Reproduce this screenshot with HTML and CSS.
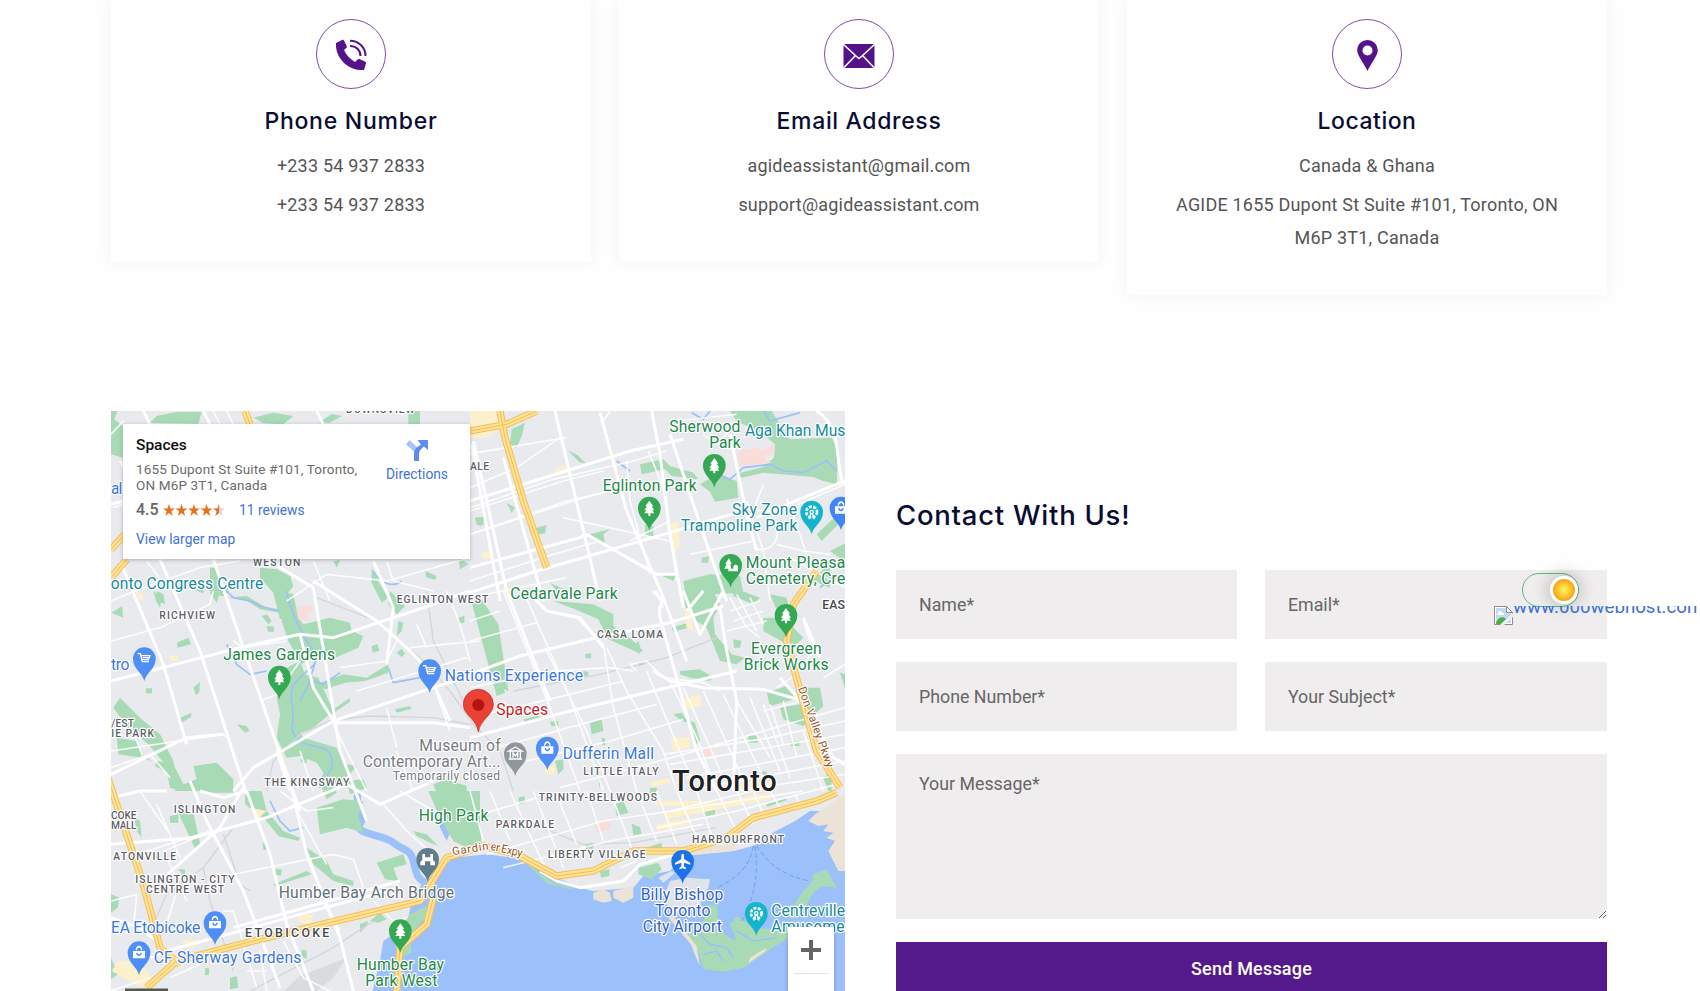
FILE: index.html
```html
<!DOCTYPE html>
<html lang="en">
<head>
<meta charset="utf-8">
<title>Contact</title>
<link rel="stylesheet" href="styles.css">
</head>
<body>
<main class="page">
  <section class="cards">
    <article class="card">
      <div class="badge">
        <svg class="badge-icon" viewBox="0 0 32 32"><path class="ink" d="M1 4 7 1c1-.5 1.800 0 2.200 1l2.500 5c.4 1 .1 1.700-.7 2.300L9 11c2 5 6 9 11 12l2.500-2.500c.8-.7 1.500-.8 2.400-.3l5 2.300c1 .5 1.400 1.200 1 2.200L29 31C12 32 0 18 1 4Z"/><path class="wave" d="M15 1.800C24 2 30.500 8.500 30.500 17M15 7C21 7 25.500 11 25.500 17"/></svg>
      </div>
      <h2 class="card-title t-phone">Phone Number</h2>
      <p class="card-line">+233 54 937 2833</p>
      <p class="card-line">+233 54 937 2833</p>
    </article>
    <article class="card">
      <div class="badge">
        <svg class="badge-icon" viewBox="0 0 32 32"><rect class="ink" x=".5" y="5" width="31" height="24" rx="1.500"/><path class="seam" d="M.5 5.500 13 17l3 2.500L19 17 31.500 5.500M1 28.500 12 17M31 28.500 20 17"/></svg>
      </div>
      <h2 class="card-title t-email">Email Address</h2>
      <p class="card-line">agideassistant@gmail.com</p>
      <p class="card-line">support@agideassistant.com</p>
    </article>
    <article class="card">
      <div class="badge">
        <svg class="badge-icon" viewBox="0 0 32 32"><path class="ink" fill-rule="evenodd" d="M16.500 1a10.300 10.300 0 0 0-10.300 10.500c0 5 6 11.500 10.300 20.500 4.300-9 10.300-15.500 10.300-20.500A10.300 10.300 0 0 0 16.500 1Zm0 5.500a5 5 0 1 1 0 10 5 5 0 0 1 0-10Z"/></svg>
      </div>
      <h2 class="card-title t-loc">Location</h2>
      <p class="card-line">Canada &amp; Ghana</p>
      <p class="card-line">AGIDE 1655 Dupont St Suite #101, Toronto, ON M6P 3T1, Canada</p>
    </article>
  </section>

  <section class="contact">
    <div class="map">
      <svg class="map-art" viewBox="111 410 734 581">
        <defs>
          <path id="pin" d="M0 67C-5 42-34 32-34 0A34 34 0 1 1 34 0C34 32 5 42 0 67Z"/>
          <path id="tree" fill="#fff" d="M0-22-12-5h5l-8 12h6l-6 9h12v8h6v-8h12L9 7h6L7-5h5Z"/>
          <path id="cart" fill="none" stroke="#fff" stroke-width="4" d="M-20-15h8l6 24h20M-10-9h27l-5 12H-7ZM-4-3h18"/>
          <path id="bag" fill-rule="evenodd" fill="#fff" d="M-18-5h36v22h-36ZM-8 0v4c3 8 13 8 16 0V0H4c0 6-8 6-8 0ZM-10-7c0-18 20-18 20 0h-4c0-11-12-11-12 0Z"/>
          <g id="wheel" fill="none" stroke="#fff" stroke-width="4"><circle r="16" stroke-dasharray="9 4" stroke-width="8"/><circle r="5"/><path d="M-2 4-8 22M2 4 8 22"/></g>
        </defs>

        <!-- water -->
        <g class="water" transform="matrix(.33333 0 0 .33333 100 790)">
          <path d="M1160 190 1060 200 1010 245 965 280 935 330 925 380 880 430 850 450 840 510 815 610H2300V60L2130 60 2085 90 2010 130 1960 165 1900 180 1800 190 1750 195 1710 240 1630 255 1600 290 1480 300 1440 290 1360 255 1300 225 1240 200Z"/>
          <path d="M1015 0 1020 110 1040 150 1060 100 1050 0Z"/>
          <path class="river" d="M775 0C760 50 800 70 780 100S850 130 880 155 930 170 940 210 950 260 975 275"/>
        </g>

        <!-- parks -->
        <g class="park" transform="matrix(.33333 0 0 .33333 100 400)">
          <path d="M33 30h20l-10 25 25 20V170L33 160ZM150 65l20-20 60-12h75l-10 35ZM460 50l60-15 60 10-30 25-60-3ZM655 65l40-25 30 5-35 20ZM925 30h35v40h-35ZM480 500l50 5 40 20 10 30-30 40 30 50-40 10-20-80-40-45ZM330 500h20l15 60-15 45-20-30ZM350 540l35 20-5 25h-20ZM700 480l20-2-10 22ZM975 510l35 15-5 12-25-8ZM815 500l25 50 25 40-20 15-30-60ZM1075 470l30 20-25 15ZM1130 355l12 5v20ZM170 570l20 10 5 30-20-10ZM290 545l25 12-5 20-20-8Z"/>
        </g>
        <g class="park" transform="matrix(.33333 0 0 .33333 470 400)">
          <path d="M125 85l40-20-10 40-15 35-20-10ZM293 148l30 15 25 25-20-5ZM510 190l70-15 20 20 70 20 15 20-80-10-20-20-70 15ZM690 250l50-30 60 20 5 50-70 12-15-30ZM780 30H905L930 70 960 115 1085 110 1105 150 1100 250 1060 240 1030 228 960 222 880 215 815 230 800 218 880 198 912 170 915 130 880 100 800 60ZM1040 400l80-75v30l-65 65ZM110 305l25 15-10 15ZM15 350l28-3-3 25h-20ZM200 380l30-8-5 25-20 3ZM360 400l60-15-20 15 5 25-40-10ZM525 370l25 5v30h-25ZM565 520l55-5-10 25ZM640 540l80-20 90 5 10 50-100 5-70 20ZM695 470l22-5-3 20h-20ZM790 560l80 30-20 20-60-25ZM1080 450l50-25v60ZM1030 540l50-60v80ZM240 545l40 20-15 10Z"/>
        </g>
        <g class="park" transform="matrix(.33333 0 0 .33333 100 590)">
          <path d="M35 65l32-20 2 35ZM230 155l35-15 8 20-40 10ZM485 75l15-5 15 20-10 10ZM500 105l22 2v15h-18ZM540 0l40 10 15 70 15 20 80-20 60 15 5 25 35 15-15 35-70 30-60-10-40 30-40-70-20-60ZM560 230l40-20 15 40 40 10 45 100-65 55-35 10 10 15 50 15 50 15 25 50 35 5-20 25-50 30 10 25-30 20-20-50 10-30-20-30-50-20-40 5-30-60 10-70-10-50ZM650 280l80-30 70 10 65-40v25l-70 25-60 5-60 20ZM680 370l70-50v12l-65 45ZM280 290l20-17-2 30-10 10ZM240 380l35-15-2 12-28 18ZM410 400l30 5 8 15-12 5ZM138 292h18v15h-18ZM890 185l15-12 10 15-10 10ZM815 165l18-5 5 20-20 5ZM885 355l45-10 5 8-45 12ZM895 90l15 5-5 25-15 15ZM870 0l45 45-25 25-25-30ZM1110 20l90 270 25 10-30-200-60-90ZM280 525l70-10 50 50v40H300ZM170 510l50 10 30 60 50-20 15 40h-90l-15-50-45-25ZM50 440l60 10 20 40 25 20-30-10-70-10ZM60 320l60 60 60 50 40 80 20 90-30-10-15-70-50-60-60-50-45-60ZM610 490l12 2-3 25-18-5ZM1000 580l40-15 60 20v20h-90ZM160 0l25 20-5 30-12-20ZM380 20l60-5 60 35 40 5v10l-60-10-45-30ZM1075 80l18-5v20h-18ZM740 570l50-5 10 25-50 20Z"/>
        </g>
        <g class="park" transform="matrix(.33333 0 0 .33333 470 590)">
          <path d="M0 15h20l85 290-25 10ZM250 30l120 10 60 30 0 35 60 45 30 30-15 5-90-40-30-60-70-30ZM605 110l50-15v15l-45 12ZM640 0h90l20 40-20 40 5 50 50 60 40 10-25 20-50-10-40-100-60-40ZM880 80l60 0 60 60-30 30-90-50ZM790 145l25 5-5 20h-18ZM345 190l18-3v15h-16ZM340 240l15 3v12h-15ZM630 240l60-5 40 25-10 10-60-10-30-10ZM890 305l60-20 40 35-90 25ZM1000 290h50l10 55-40 40-20 20-60-20-10-35 60-10ZM360 395l35-10 5 35-35 10ZM660 390l15 5 15 55-10 10-15-30ZM610 370l25-5 20 30-20-5ZM835 435l28-2v22h-28ZM240 393l25-3v15h-22ZM960 455l28-5v15h-26ZM395 440l10 3v20h-8ZM385 550l8 25-5 15ZM255 510l25-5v30l-15 15ZM1110 245l20 5v60ZM1060 560l25-20v60h-10ZM160 385l50-12-5 10-40 10ZM505 215l15-5 5 10-18 5ZM870 543l20-3v12h-20ZM900 10l50 10 10 40-30 20ZM505 150l10 30-10 10-10-30ZM540 590l20 0v15h-20Z"/>
        </g>
        <g class="park" transform="matrix(.33333 0 0 .33333 100 790)">
          <path d="M650 50l80-25 60 5-15 45 10 30 5 20-50-15-80 20ZM985 0h155v170l-40 0-40-20-40-70ZM940 120l40 10 35 35-25-10-40-20ZM830 215l80-25 10 30-40 10 15 40-40-5ZM435 0h50l15 60 50 60 50 20-5 10-60-15-40-50-60-45ZM620 170l60 40 20 40 60 20v15l-60-15-60-50ZM525 235h20l-2 18h-18ZM520 280l100-40 15 10-110 35ZM235 65l45 0 22 100-18 5ZM210 75l25-5v25h-25ZM487 155l12 5 3 18-12-3ZM810 390l30-25 20 20-25 10ZM780 400l25-10-5 15-20 20ZM930 370l50-25 20 30-40 20-30 50 5 40-35 15-20-50ZM390 560l20-5 5 35-25 5ZM315 530l12 2v20h-12ZM33 310l25 10-5 30-20 15ZM33 500l20 50-20 15ZM100 70l20 20 5 50-15-20ZM235 235l20 0v25ZM605 475l15 5v25l-15-10Z"/>
        </g>
        <g class="park" transform="matrix(.33333 0 0 .33333 470 790)">
          <path d="M0 80l30 20 5 50-35 20ZM145 20l18-5 3 20-18 5ZM435 40l25-10 15 35-35 10ZM485 98l25 10 5 20-25 5ZM700 60l35-5v15l-32 8ZM345 160l25-5v20h-22ZM390 240l28-5v20l-25 5ZM515 175l60-20v20l-60 10ZM505 230l60-15 10 20-30 30-40-15ZM890 40l60-20v8l-60 20ZM720 340L742 345 745 405 775 440 800 450 780 400 800 375 850 410 905 415 960 400 1010 400 940 450 880 490 820 530 760 542 700 535 685 480 660 440 655 415 700 390ZM955 365L1000 300 1028 270 1030 250 1070 235 1100 290 1058 285 1030 305 1000 360 970 385ZM150 200l100 75 60 15-5 5-70-15ZM645 170l40 0-5 12-40 5Z"/>
          <path class="sand" d="M1015 90l20-20 90-60v230l-20 0-30-60 20-30-25-10 20-15-30-5 15-20-30 5ZM370 305l30-10 20 10 5 25-25 5-30-10ZM430 300l60-15v35l-30 15-30-15ZM670 170l125-10v20l-125 12ZM595 380l15-5 70 90 10 60-12-25-15-40ZM840 500l50-30-5 12-50 35Z"/>
          <path class="runway" d="M565 260l40-20 10 5-35 30ZM600 270l50-10 70 5-5 25-30 60-80 20-25-50Z"/>
        </g>

        <!-- streams -->
        <g class="stream" transform="matrix(.33333 0 0 .33333 100 590)">
          <path d="M560 0C570 60 600 120 640 180S560 240 575 330 560 400 590 440 680 450 695 500 655 560 660 590M600 330C640 270 640 200 670 160M380 160 410 220 450 250 500 240M865 230 880 275 960 260M380 0 400 20 450 30 480 45 540 60M640 270 670 280 720 245"/>
          <path d="M820-60C840-20 880-10 905-30M510 630 540 690 570 720 610 710"/>
        </g>
        <g class="stream" transform="matrix(.33333 0 0 .33333 470 400)"><path d="M665 35 700 55 720 30M440 180 480 210M700 200 780 235 820 200 900 190 940 210 1000 215 1070 180 1100 210M880 30 900 60 990 35M1100 520 1050 560"/></g>
        <g class="stream" transform="matrix(.33333 0 0 .33333 470 790)"><path d="M690 430 720 460 770 470 790 500M700 490 740 480 760 510M800 420 850 450 920 440"/></g>

        <!-- built-up accents -->
        <g class="accent" transform="matrix(.33333 0 0 .33333 470 400)"><path d="M0 30h90v50l-40 30H0ZM255 200l35-5-5 20-30 5ZM35 455l25-5 5 20-25 5ZM600 370l25-10 5 80-25 20Z"/><path class="clinic" d="M805 150l60-10 10 10 40-20-5 30-35 10 30 15-100 10Z"/></g>
        <g class="accent" transform="matrix(.33333 0 0 .33333 470 590)"><path d="M640 325l50-15 5 35-45 10ZM225 530l30-5v25h-30ZM600 440l60 0 0 30-50 10ZM800 570l120 0v30h-120ZM640 50l20 10 10 60-20-10ZM540 575l60-15v15l-55 15Z"/><path class="clinic" d="M700 475l30-5v25l-30 5Z"/></g>
        <g class="accent" transform="matrix(.33333 0 0 .33333 100 790)"><path d="M590 370l50 0-10 30-30-5ZM55 510l60 0 40 50-30 30-90-50ZM240 450l60-5-20 30ZM450 50l50 10-30 25Z"/><path d="M580 55l320-60v20l-310 60ZM550 20h180v15H560ZM560 90l100-20v20l-100 20Z" transform="translate(1110 10)"/><path class="clinic" d="M1485 100l40-10 10 20-45 15Z"/></g>
        <g class="accent" transform="matrix(.33333 0 0 .33333 100 590)"><path d="M210 195l22-5 3 18-22 3ZM110 0l20 10v20l-15-5Z"/><path class="clinic" d="M590 50l40-10 10 20-20 15 5 15-30-5Z"/></g>

        <!-- railways -->
        <g class="rail" transform="matrix(.33333 0 0 .33333 100 590)"><path d="M650 20 830 90 960 200 1050 300 1120 400 1200 480 1240 600M600 430 690 390 800 375 1000 380 1110 400M1240 300 1500 250 1700 200 1850 140M500 600 520 510 600 430M1100 350 1000 150 980 0"/></g>
        <g class="rail" transform="matrix(.33333 0 0 .33333 100 790)"><path d="M400 110 310 230 200 310 160 400M310 230 330 330 400 540M370 130 420 280 450 300M450 600 700 470 820 390M1300 100 1450 160 1600 155 1850 110"/><path class="yard" d="M540 610 600 555 740 500 700 560 640 610Z"/></g>

        <!-- minor streets -->
        <g class="minor" transform="matrix(.33333 0 0 .33333 100 400)">
          <path d="M33 100 70 60M40 320 140 290M33 600 130 560 300 500 420 480M140 480 200 560M340 30 360 70M380 30 400 70M560 600 680 520 860 540 1110 470M860 480 880 540 1000 570M640 480 690 600M1100 160 1400 110M1110 320 1360 235 1600 180 1700 150M1110 400 1400 300 1600 255M1110 540 1360 460 1500 420M1110 590 1400 530"/>
        </g>
        <g class="minor" transform="matrix(.33333 0 0 .33333 470 400)">
          <path d="M0 260 140 200 270 110M0 330 280 240 400 210M0 400 310 300 480 250M535 150 580 260 620 540M470 180 480 300 540 520M280 350 600 420M480 420 600 360M830 300 880 450 900 600M950 290 1010 460M880 250 850 330 960 320 1125 250M700 100 740 130 800 70M850 440C900 460 930 420 920 380M920 430 1000 450 1080 460M400 60 420 30M840 500 960 470 1125 560M620 60 800 40M660 460 850 420"/>
        </g>
        <g class="minor" transform="matrix(.33333 0 0 .33333 100 590)">
          <path d="M33 150 180 110 330 40 340 0M33 480 370 430 380 440M480 330 530 310 600 210M400 150 430 170 560 150M860 350 890 470M770 300 1100 200M1000 280 1050 420M1040 0 1080 100 1110 210M950 100 980 170M930 170 1140 150M720 230 860 210 890 150M600 480 640 600M700 400 800 600M890 480 940 600M33 530 150 490 210 560M90 400 130 500M33 390 100 390"/>
        </g>
        <g class="minor" transform="matrix(.33333 0 0 .33333 470 590)">
          <path d="M100 0 240 350 330 600M160 0 300 320 400 600M230 180 350 420 420 600M310 70 400 160 430 350 500 600M410 170 470 300 580 480 620 600M530 240 600 410 680 600M600 270 680 440 740 600M640 290 760 560M700 300 830 590M760 310 880 560M800 330 900 500M840 320 930 540M880 340 960 560M0 150 200 95M90 60 0 90M0 290 250 240 420 230 490 240M500 240 480 220 530 210 580 260 700 275 750 300M0 380 300 310 460 270M80 470 350 395 560 340M170 510 420 450 640 385M270 590 640 490 880 420 1125 350M580 490 900 440 1125 390M600 520 1125 430M650 560 1125 470M700 590 1125 510M800 600 1125 550M580 50 560 0M780 20 830 110 870 140M800 10 860 120M840 20 880 100M780 60 870 30M790 90 880 60M770 120 890 90M900 340 940 460M940 330 980 500M1000 420 1060 600M880 360 1000 330M1060 260 1125 220M1000 90 1030 180 980 250 920 290"/>
        </g>
        <g class="minor" transform="matrix(.33333 0 0 .33333 100 790)">
          <path d="M170 40 240 200M120 0 210 130M110 190 330 120M33 330 110 310 100 420M400 250 700 190 760 205 790 290M580 40 680 220M540 0 620 60 700 50M850 40 930 130 1000 190M200 400 230 300M370 360 400 360 470 590M200 200 260 330M640 290 720 420M550 450 610 560 690 600M480 480 500 600M440 540 500 540M150 500 300 450M33 600 150 560M210 560 300 520M190 180 340 120M900 0 1000 60M820 330 880 390 920 380"/>
        </g>
        <g class="minor" transform="matrix(.33333 0 0 .33333 470 790)">
          <path d="M0 0 40 150M60 0 120 150M120 0 220 220M190 0 280 230M260 10 320 160M350 0 400 150M420 0 500 210M500 0 560 150M560 0 620 160M620 0 680 140M680 0 730 150M740 0 800 120M800 0 850 100M850 0 880 70M900 0 930 50M970 0 990 40M0 80 200 20M50 190 400 90 600 60 850 0M100 230 420 150 700 100M540 70 1000 0M560 110 800 60 1100-20M450 230 500 210"/>
        </g>

        <!-- arterial streets -->
        <g class="major" transform="matrix(.33333 0 0 .33333 100 400)">
          <path d="M60 180 130 290 180 420M60 480 190 790 260 1030M130 30 150 70M310 30 330 70M33 310 70 300M180 475 300 750 440 1180M340 475 430 740 540 1060 600 1230M500 475 640 560 720 1050 800 1260M33 840 420 740 600 700 700 710 1000 610 1110 570M33 1120 260 1010 370 1000M640 540 830 660 920 740 980 800 1050 960M820 480 880 620 860 790M1115 130 1200 600M650 30 670 70"/>
        </g>
        <g class="major" transform="matrix(.33333 0 0 .33333 470 400)">
          <path d="M10 120 110 570 240 900M100 170 220 600M255 30 390 600M390 35 470 330 580 590 650 780M545 30 570 160 600 400 640 620M600 100 700 400 770 600M780 100 830 340 860 450M0 300 480 150 640 115M0 500 330 410 350 400 560 520 620 520M0 575 200 510 600 395 850 320M1040 30C1120 80 1090 160 1120 250M1125 240 1000 290 860 350"/>
        </g>
        <g class="major" transform="matrix(.33333 0 0 .33333 100 590)">
          <path d="M400 600 460 530 700 390 1000 290 1140 245M530 480 570 600M700 395 1000 395 1110 410M600 130 640 290 700 390"/>
        </g>
        <g class="major" transform="matrix(.33333 0 0 .33333 470 590)">
          <path d="M0 250 150 195 400 135 600 95 760 45M550 0C600 50 560 20 570 80L680 480 740 600M640 0 690 130 760 0M750 50 770 180 800 330 790 600M650 60 700 0M0 440 300 360 800 240M550 240 600 270 700 290 880 295 1000 330M930 260 1000 340 1090 500 1125 520M170 0 230 60 330 80 400 170M1000 80 1050 200"/>
        </g>
        <g class="major" transform="matrix(.33333 0 0 .33333 100 790)">
          <path d="M270-30 320 90 430 300 540 590M440 0 510 190 560 400 640 600M570-30 620 190 720 440 760 600M430-10 360 110 180 270M33 160 280 140 500 80 740-20M740-20 840 40 1000-30M400 410 900 270M200 480 600 370 900 290M33 20 120 0 200 0M300 0 370 20 440 0M33 380 120 410 230 500 350 480"/>
          <path d="M1320 240 1370 270 1440 290 1570 270 1620 220 1720 190" />
        </g>

        <!-- highways -->
        <g class="hwy" transform="matrix(.33333 0 0 .33333 100 400)">
          <path id="h401" d="M33 445 75 400M33 530 80 475M435 30 450 70M1110 90 1220 70 1310 30M1200 30 1215 110 1270 300 1340 500"/>
          <path id="hgard" d="M20 1120 70 1270 130 1450 180 1640 240 1690M140 1760 230 1680 460 1620 750 1550 960 1500 1040 1370 1150 1335 1250 1360 1370 1425 1480 1410 1600 1350 1750 1350 1880 1310 1960 1250 2150 1200 2210 1175M1000 1490 980 1570 900 1640 890 1773M2150 510 2080 610 2060 720 2100 870 2150 1050 2220 1160"/>
        </g>
        <g class="hwy-core" transform="matrix(.33333 0 0 .33333 100 400)"><use href="#h401"/><use href="#hgard"/></g>
        <g class="hwy-line" transform="matrix(.33333 0 0 .33333 100 400)"><use href="#h401"/><use href="#hgard"/></g>

        <path class="ferry" transform="matrix(.33333 0 0 .33333 470 790)" d="M850 165C840 230 790 270 740 290M855 165C870 280 840 340 815 390M860 165C900 230 960 260 1020 270"/>

        <!-- markers -->
        <g transform="matrix(.33333 0 0 .33333 100 401)">
          <g transform="translate(1648 318)"><use href="#pin" fill="#34a853"/><use href="#tree"/></g>
          <g transform="translate(1843 190)"><use href="#pin" fill="#34a853"/><use href="#tree"/></g>
          <g transform="translate(1892 490)"><use href="#pin" fill="#34a853"/><path fill="#fff" d="M-5-22-16-4h4l-7 14h12v8H8V10H2L-1-4h4ZM8 5a7 7 0 0 1 14 0v13H8Z"/></g>
          <g transform="translate(2135 330)"><use href="#pin" fill="#12b5cb"/><use href="#wheel"/></g>
          <g transform="translate(2223 318)"><use href="#pin" fill="#4285f4"/><use href="#bag"/></g>
          <g transform="translate(133 770)"><use href="#pin" fill="#4f8ff5"/><use href="#cart"/></g>
          <g transform="translate(538 825)"><use href="#pin" fill="#34a853"/><use href="#tree"/></g>
          <g transform="translate(989 806)"><use href="#pin" fill="#4f8ff5"/><use href="#cart"/></g>
          <g transform="translate(2058 640)"><use href="#pin" fill="#34a853"/><use href="#tree"/></g>
          <g transform="translate(1246 1055)"><use href="#pin" fill="#8f979d"/><path fill="none" stroke="#fff" stroke-width="4" d="M-20-8 0-20 20-8ZM-15-6v20M15-6v20M-20 16h40M-7 12V-2L0 7 7-2v14"/></g>
          <g transform="translate(1342 1038)"><use href="#pin" fill="#4f8ff5"/><use href="#bag"/></g>
          <g transform="translate(983 1372)"><use href="#pin" fill="#607d8b"/><path fill="#fff" d="M-22 18v-10l6-6v-18h8V-6H8v-10h8V2l6 6v10H8V6H-8v12Z"/></g>
          <g transform="translate(901 1586)"><use href="#pin" fill="#34a853"/><use href="#tree"/></g>
          <g transform="translate(345 1562)"><use href="#pin" fill="#4f8ff5"/><use href="#bag"/></g>
          <g transform="translate(117 1652)"><use href="#pin" fill="#4f8ff5"/><use href="#bag"/></g>
          <g transform="translate(1748 1378)"><use href="#pin" fill="#1a73e8"/><path fill="#fff" d="M0-23c3 0 4 4 4 8v8l19 12v5L4 4v11l6 5v4L0 21l-10 3v-4l6-5V4l-19 6V5L-4-7v-8c0-4 1-8 4-8Z"/></g>
          <g transform="translate(1969 1534)"><use href="#pin" fill="#12b5cb"/><use href="#wheel"/></g>
          <path fill="#ea4335" stroke="#c5221f" stroke-width="2" d="M1135 990C1130 950 1090 940 1090 907A45 45 0 0 1 1180 907C1180 940 1142 950 1135 990Z"/>
          <circle fill="#b31412" cx="1135" cy="909" r="18"/>
        </g>

        <!-- labels -->
        <g class="lbl" transform="matrix(.33333 0 0 .33333 100 400)">
          <g class="green">
            <text x="1708" y="94" textLength="213">Sherwood</text><text x="1828" y="142" textLength="94">Park</text>
            <text x="1508" y="270" textLength="282">Eglinton Park</text>
            <text x="1231" y="595" textLength="322">Cedarvale Park</text>
            <text x="1937" y="500" textLength="299">Mount Pleasa</text><text x="1937" y="549" textLength="299">Cemetery, Cre</text>
            <text x="370" y="776" textLength="335">James Gardens</text>
            <text x="1953" y="759" textLength="212">Evergreen</text><text x="1931" y="807" textLength="255">Brick Works</text>
            <text x="956" y="1260" textLength="209">High Park</text>
            <text x="770" y="1707" textLength="262">Humber Bay</text><text x="796" y="1754" textLength="216">Park West</text>
          </g>
          <g class="teal">
            <text x="1935" y="104" textLength="301">Aga Khan Mus</text>
            <text x="1896" y="343" textLength="195">Sky Zone</text><text x="1742" y="391" textLength="350">Trampoline Park</text>
            <text x="32" y="563" textLength="458">onto Congress Centre</text>
            <text x="2014" y="1546" textLength="221">Centreville</text><text x="2014" y="1594" textLength="220">Amuseme</text>
          </g>
          <g class="blue">
            <text x="33" y="279" textLength="34">al</text>
            <text x="33" y="806" textLength="55">tro</text>
            <text x="1034" y="840" textLength="415">Nations Experience</text>
            <text x="1388" y="1073" textLength="274">Dufferin Mall</text>
            <text x="33" y="1595" textLength="268">EA Etobicoke</text>
            <text x="161" y="1686" textLength="443">CF Sherway Gardens</text>
          </g>
          <g class="navy">
            <text x="1622" y="1497" textLength="248">Billy Bishop</text><text x="1665" y="1544" textLength="166">Toronto</text><text x="1628" y="1594" textLength="238">City Airport</text>
          </g>
          <g class="gray">
            <text x="958" y="1050" textLength="244">Museum of</text><text x="788" y="1098" textLength="414">Contemporary Art...</text><text class="sm" x="878" y="1136" textLength="322">Temporarily closed</text>
          </g>
          <text class="slate" x="536" y="1491" textLength="526">Humber Bay Arch Bridge</text>
          <text class="red" x="1189" y="943" textLength="155">Spaces</text>
          <text class="city" x="1716" y="1170" textLength="314">Toronto</text>
          <g class="caps">
            <text x="738" y="36" textLength="206">DOWNSVIEW</text>
            <text x="1110" y="208" textLength="57">ALE</text>
            <text x="459" y="495" textLength="142">WESTON</text>
            <text x="178" y="655" textLength="167">RICHVIEW</text>
            <text x="890" y="606" textLength="275">EGLINTON WEST</text>
            <text x="1491" y="711" textLength="198">CASA LOMA</text>
            <text class="mid" x="2167" y="623" textLength="68">EAS</text>
            <text x="34" y="977" textLength="68">/EST</text><text x="34" y="1009" textLength="128">IE PARK</text>
            <text x="493" y="1155" textLength="255">THE KINGSWAY</text>
            <text x="1450" y="1122" textLength="226">LITTLE ITALY</text>
            <text x="1316" y="1201" textLength="355">TRINITY-BELLWOODS</text>
            <text x="1187" y="1280" textLength="175">PARKDALE</text>
            <text x="1776" y="1325" textLength="276">HARBOURFRONT</text>
            <text x="1343" y="1370" textLength="294">LIBERTY VILLAGE</text>
            <text x="221" y="1235" textLength="185">ISLINGTON</text>
            <text x="33" y="1254" textLength="77">COKE</text><text x="33" y="1285" textLength="77">MALL</text>
            <text x="40" y="1376" textLength="188">ATONVILLE</text>
            <text x="106" y="1445" textLength="298">ISLINGTON - CITY</text><text x="138" y="1476" textLength="234">CENTRE WEST</text>
            <text class="mid" x="435" y="1607" textLength="253">ETOBICOKE</text>
          </g>
          <text class="roadname" transform="translate(2094 862) rotate(70)" textLength="255">Don Valley Pkwy</text>
          <text class="roadname" transform="translate(1058 1363) rotate(-9)" textLength="110">Gardin</text>
          <text class="roadname" transform="translate(1170 1346) rotate(13)" textLength="98" xml:space="preserve">er Expy</text>
        </g>
        <rect x="125" y="987.500" width="43" height="6" fill="#555a50"/>
      </svg>

      <div class="place">
        <div class="place-main">
          <div class="place-name">Spaces</div>
          <div class="place-addr">1655 Dupont St Suite #101, Toronto,<br>ON M6P 3T1, Canada</div>
          <div class="rating">
            <span class="score">4.5</span>
            <svg class="stars" viewBox="0 0 62 12">
              <defs><path id="star" d="M6 0 7.500 4.400H12L8.300 7.200 9.700 12 6 9.100 2.300 12 3.700 7.200 0 4.400H4.500Z"/></defs>
              <g fill="#e7711b"><use href="#star"/><use href="#star" x="12.500"/><use href="#star" x="25"/><use href="#star" x="37.500"/></g>
              <use href="#star" x="50" fill="#d5d5d5"/><path fill="#e7711b" d="M56 0V9.100L52.300 12 53.700 7.200 50 4.400H54.500Z"/>
            </svg>
            <span class="reviews">11 reviews</span>
          </div>
          <div class="larger">View larger map</div>
        </div>
        <div class="directions">
          <svg class="dir-icon" viewBox="0 0 22 22"><path fill="#a9c4f7" d="M0 5.500 3.500 1 11 8 8.500 13Z"/><path fill="#5b8def" d="M8 22V15C8 10 11 8 15 5.500L11.500 1H22V11L18 7.500C15 10 13 11.500 13 15v7Z"/></svg>
          <span>Directions</span>
        </div>
      </div>
      <div class="zoom"><svg class="plus" viewBox="0 0 20 20"><path d="M8 0h4v8h8v4h-8v8H8v-8H0V8h8Z"/></svg><span class="zoom-rule"></span></div>
    </div>

    <form class="form">
      <h2 class="form-title">Contact With Us!</h2>
      <div class="fields">
        <input class="field" type="text" placeholder="Name*">
        <input class="field" type="text" placeholder="Email*">
        <input class="field" type="text" placeholder="Phone Number*">
        <input class="field" type="text" placeholder="Your Subject*">
        <textarea class="field message" placeholder="Your Message*"></textarea>
        <button class="send" type="button">Send Message</button>
      </div>
    </form>
  </section>
</main>

<div class="toggle"><span class="knob"></span></div>
<div class="host">
  <svg class="broken" viewBox="0 0 19 19"><path fill="#fff" stroke="#8d8d8d" d="M.5.500h12l6 6v12H.5Z"/><path fill="#c3d9f8" d="M2 2h10v5h5v10H2Z"/><path fill="#fff" d="M4 7c1-3 4-2 4 0h2v2H3Z"/><path fill="#4caf3f" d="M2 17c2-6 7-7 10-4l-5 5H2Z"/><path fill="#efedee" d="M19 7v4L10 19H6Z"/><path fill="none" stroke="#8d8d8d" d="M12.500.500v6h6"/></svg>
  <span class="host-clip"><span class="host-text">www.000webhost.com</span></span>
</div>
</body>
</html>
```
FILE: styles.css
```css
* { box-sizing: border-box; }
html, body { margin: 0; height: 991px; overflow: hidden; background: #fefefe; }
body { position: relative; font-family: Roboto, "Liberation Sans", sans-serif; color: #555; }
h2, p { margin: 0; }

.page { padding: 0 93px 0 111px; }
.cards { display: grid; grid-template-columns: 480px 480px 480px; column-gap: 28px; align-items: start; height: 410.5px; }
.card { padding: 19px 40px 35px; text-align: center; box-shadow: 0 0 14px rgba(0, 0, 0, .05); background: #fefefe; }
.badge { display: flex; align-items: center; justify-content: center; width: 70px; height: 70px; margin: 0 auto; border: 1px solid #7d4fa6; border-radius: 50%; }
.badge-icon { width: 32px; height: 32px; margin-top: 2px; overflow: visible; }
.ink { fill: #541388; }
.wave { fill: none; stroke: #541388; stroke-width: 2; }
.seam { fill: none; stroke: #fefefe; stroke-width: 1.6; }
.card-title { margin: 14px 0 10px; font: 500 23px/36px Inter, "Open Sans", sans-serif; color: #0a0d33; white-space: nowrap; }
.t-phone { letter-spacing: .75px; }
.t-email { letter-spacing: .65px; }
.t-loc { letter-spacing: .5px; }
.card-line { margin-bottom: 6px; font-size: 18px; line-height: 33px; letter-spacing: .2px; }

.contact { display: flex; gap: 51px; }
.map { position: relative; flex: none; width: 734px; height: 581px; overflow: hidden; background: #e8eaed; }
.map-art { display: block; width: 734px; height: 581px; }
.water { fill: #9cc0f9; }
.river { fill: none; stroke: #9cc0f9; stroke-width: 22; }
.park { fill: #a8dab5; }
.sand { fill: #ebe3d5; }
.runway { fill: #dfe3ea; }
.stream { fill: none; stroke: #9cc0f9; stroke-width: 5; }
.accent { fill: #fdf0cd; }
.clinic { fill: #fadcd9; }
.rail { fill: none; stroke: #d3d5d9; stroke-width: 4; }
.yard { fill: #d9dbdf; stroke: none; }
.minor { fill: none; stroke: #fff; stroke-width: 5; stroke-linejoin: round; opacity: .85; }
.major { fill: none; stroke: #fff; stroke-width: 9; stroke-linejoin: round; }
.hwy, .hwy-core, .hwy-line { fill: none; stroke-linejoin: round; }
.hwy { stroke: #f5bd58; stroke-width: 22; }
.hwy-core { stroke: #fde293; stroke-width: 16; }
.hwy-line { stroke: #f5bd58; stroke-width: 3; }
.ferry { fill: none; stroke: #6f9ff0; stroke-width: 3; stroke-dasharray: 14 8; }
.lbl { font-family: Roboto, sans-serif; font-size: 47px; paint-order: stroke; stroke: #fff; stroke-width: 7px; stroke-linejoin: round; }
.green { fill: #22874a; }
.teal { fill: #178a9c; }
.blue { fill: #3a78de; }
.navy { fill: #2f62c9; }
.gray { fill: #777c81; }
.slate { fill: #607078; }
.red { fill: #c5221f; }
.sm { font-size: 36px; }
.city { font-size: 87px; font-weight: 500; fill: #202124; }
.caps { font-size: 31px; font-weight: 500; fill: #5c6065; }
.mid { font-size: 37px; fill: #45484c; }
.roadname { font-size: 34px; fill: #94562a; }

.place { position: absolute; left: 12px; top: 13px; display: flex; justify-content: space-between; width: 347px; height: 135px; padding: 11px 22px 0 13px; background: #fff; box-shadow: 0 1px 4px rgba(0, 0, 0, .25); }
.place-name { font-size: 15.5px; line-height: 20px; font-weight: 500; color: #111; }
.place-addr { margin-top: 6px; font-size: 13.5px; line-height: 16.5px; color: #6b6b6b; white-space: nowrap; letter-spacing: .15px; }
.rating { display: flex; align-items: center; height: 20px; margin-top: 6px; }
.score { width: 27px; font-size: 16px; font-weight: 500; color: #666; }
.stars { width: 62px; height: 12px; margin-right: 14px; }
.reviews, .larger, .directions { font-size: 13.8px; color: #4272d7; }
.larger { margin-top: 10px; line-height: 18px; }
.directions { display: flex; flex-direction: column; align-items: center; gap: 5px; padding-top: 4px; }
.dir-icon { width: 22px; height: 22px; }
.zoom { position: absolute; right: 11px; bottom: -30px; display: flex; flex-direction: column; align-items: center; width: 46px; height: 95px; padding-top: 13px; background: #fff; box-shadow: 0 1px 4px rgba(0, 0, 0, .25); }
.plus { width: 20px; height: 20px; fill: #666; }
.zoom-rule { width: 34px; height: 1px; margin-top: 13px; background: #e3e3e3; }

.form { flex: none; width: 711px; padding-top: 83.5px; }
.form-title { font: 500 27.5px/42px Inter, "Open Sans", sans-serif; letter-spacing: .75px; color: #0a0d33; white-space: nowrap; }
.fields { display: grid; grid-template-columns: 341px 342px; column-gap: 28px; row-gap: 23px; margin-top: 34px; }
.field { width: 100%; height: 69px; padding: 0 23px 1px; border: 0; border-radius: 0; background: #efedee; font: 400 17.8px/24px Roboto, sans-serif; color: #666; outline: 0; }
.field::placeholder { color: #666; opacity: 1; }
.message { grid-column: 1 / 3; display: block; height: 165px; padding-top: 18px; }
.send { grid-column: 1 / 3; height: 60px; padding: 0 0 6px; border: 0; background: #541a8b; font: 500 18px/24px Roboto, sans-serif; letter-spacing: .2px; color: #fff; }

.toggle { position: absolute; left: 1522px; top: 573px; width: 57px; height: 34px; border: 1px solid #5dbb7c; border-radius: 17px; }
.knob { position: absolute; right: 0; top: 2px; width: 28px; height: 28px; border: 3px solid #fff; border-radius: 50%; background: radial-gradient(circle, #ffe95a 10%, #fdc22d 45%, #f59c0b 75%); box-shadow: 0 0 18px rgba(0, 0, 0, .3); }
.host { position: absolute; left: 1494px; top: 606px; display: flex; width: 206px; height: 19px; }
.broken { flex: none; width: 19px; height: 19px; }
.host-clip { display: block; height: 8px; overflow: hidden; }
.host-text { display: block; margin-top: -11px; font-size: 18.7px; line-height: 24px; color: #3d6fd9; white-space: nowrap; }
```
